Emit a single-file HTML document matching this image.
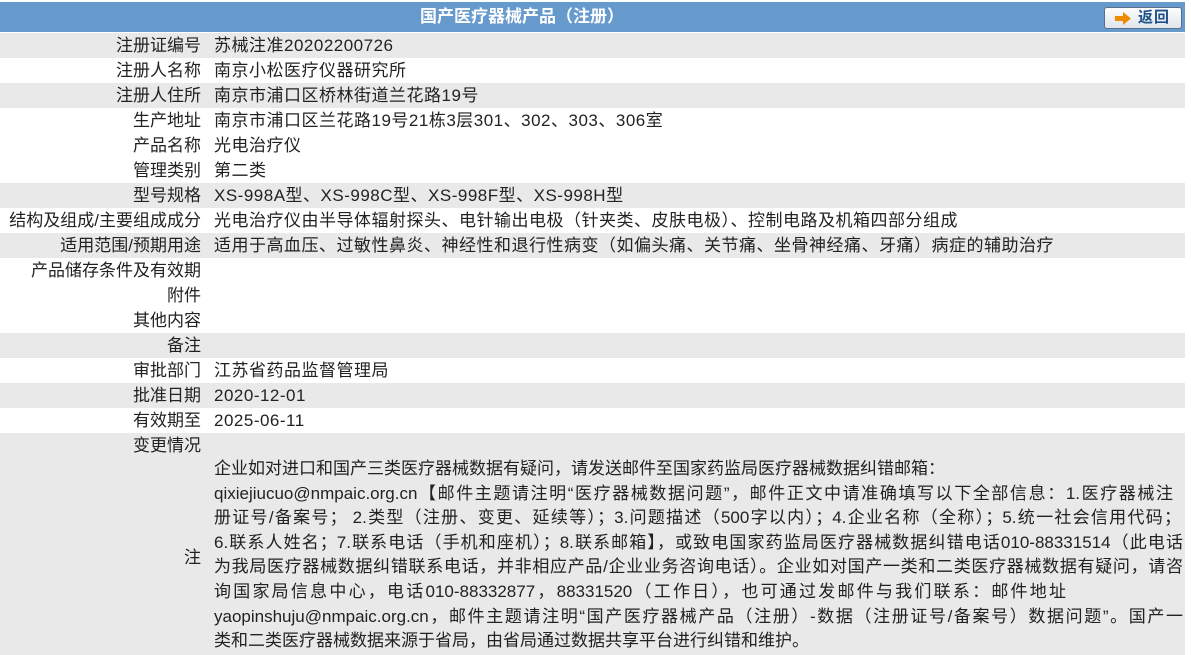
<!DOCTYPE html>
<html><head><meta charset="utf-8">
<style>
html,body{margin:0;padding:0;background:#fff;width:1191px;height:655px;overflow:hidden}
body{font-family:"Liberation Sans","Noto Sans CJK SC",sans-serif;color:#222;font-size:17px}
#hd{position:absolute;left:0;top:2px;width:1185px;height:30px;background:#6699cc;}
#hd .t{position:absolute;left:0;width:1044px;top:0;text-align:center;line-height:30px;color:#fff;font-weight:bold;font-size:17px}
#btn{position:absolute;left:1104px;top:5px;width:78px;height:22px;border:1px solid #5a6f8a;border-radius:3px;background:linear-gradient(#fdfdfd,#dfe5ec);box-sizing:border-box}
#btn span{position:absolute;left:33px;top:0;line-height:20px;font-weight:bold;color:#1d4f8a;font-size:15px;letter-spacing:1px}
.row{position:absolute;left:0;width:1185px;height:25px;line-height:25px;white-space:nowrap}
.g{background:#e9e9e9}
.l{position:absolute;right:984px;top:0;text-align:right}
.v{position:absolute;left:214px;top:0;letter-spacing:0.5px}
#note{position:absolute;left:0;top:433px;width:1185px;height:222px;background:#e9e9e9}
#nt{position:absolute;left:214px;top:24px}
#nt div{height:24.6px;line-height:24.6px;white-space:nowrap;text-align:justify;text-align-last:justify;overflow:visible}
</style></head><body>
<div id="hd"><div class="t">国产医疗器械产品（注册）</div>
<div id="btn"><svg style="position:absolute;left:10px;top:4px" width="17" height="13" viewBox="0 0 17 13"><path d="M0 4h8V0l8 6.5-8 6.5V9H0z" fill="#f08c00"/></svg><span>返回</span></div></div>

<div class="row g" style="top:33px"><div class="l">注册证编号</div><div class="v">苏械注准20202200726</div></div>
<div class="row" style="top:58px"><div class="l">注册人名称</div><div class="v">南京小松医疗仪器研究所</div></div>
<div class="row g" style="top:83px"><div class="l">注册人住所</div><div class="v">南京市浦口区桥林街道兰花路19号</div></div>
<div class="row" style="top:108px"><div class="l">生产地址</div><div class="v">南京市浦口区兰花路19号21栋3层301、302、303、306室</div></div>
<div class="row" style="top:133px"><div class="l">产品名称</div><div class="v">光电治疗仪</div></div>
<div class="row" style="top:158px"><div class="l">管理类别</div><div class="v">第二类</div></div>
<div class="row g" style="top:183px"><div class="l">型号规格</div><div class="v">XS-998A型、XS-998C型、XS-998F型、XS-998H型</div></div>
<div class="row" style="top:208px"><div class="l">结构及组成/主要组成成分</div><div class="v">光电治疗仪由半导体辐射探头、电针输出电极（针夹类、皮肤电极）、控制电路及机箱四部分组成</div></div>
<div class="row g" style="top:233px"><div class="l">适用范围/预期用途</div><div class="v">适用于高血压、过敏性鼻炎、神经性和退行性病变（如偏头痛、关节痛、坐骨神经痛、牙痛）病症的辅助治疗</div></div>
<div class="row" style="top:258px"><div class="l">产品储存条件及有效期</div></div>
<div class="row" style="top:283px"><div class="l">附件</div></div>
<div class="row" style="top:308px"><div class="l">其他内容</div></div>
<div class="row g" style="top:333px"><div class="l">备注</div></div>
<div class="row" style="top:358px"><div class="l">审批部门</div><div class="v">江苏省药品监督管理局</div></div>
<div class="row g" style="top:383px"><div class="l">批准日期</div><div class="v">2020-12-01</div></div>
<div class="row" style="top:408px"><div class="l">有效期至</div><div class="v">2025-06-11</div></div>
<div id="note">
<div class="row" style="top:0"><div class="l">变更情况</div></div>
<div style="position:absolute;right:984px;top:112px;line-height:25px">注</div>
<div id="nt">
<div style="width:728px">企业如对进口和国产三类医疗器械数据有疑问，请发送邮件至国家药监局医疗器械数据纠错邮箱：</div>
<div style="width:959px">qixiejiucuo@nmpaic.org.cn【邮件主题请注明“医疗器械数据问题”，邮件正文中请准确填写以下全部信息：1.医疗器械注</div>
<div style="width:967px">册证号/备案号； 2.类型（注册、变更、延续等）；3.问题描述（500字以内）；4.企业名称（全称）；5.统一社会信用代码；</div>
<div style="width:969px">6.联系人姓名；7.联系电话（手机和座机）；8.联系邮箱】，或致电国家药监局医疗器械数据纠错电话010-88331514（此电话</div>
<div style="width:969px">为我局医疗器械数据纠错联系电话，并非相应产品/企业业务咨询电话）。企业如对国产一类和二类医疗器械数据有疑问，请咨</div>
<div style="width:852px">询国家局信息中心，电话010-88332877，88331520（工作日），也可通过发邮件与我们联系：邮件地址</div>
<div style="width:969px">yaopinshuju@nmpaic.org.cn，邮件主题请注明“国产医疗器械产品（注册）-数据（注册证号/备案号）数据问题”。国产一</div>
<div style="width:589px">类和二类医疗器械数据来源于省局，由省局通过数据共享平台进行纠错和维护。</div>
</div>
</div>
</body></html>
